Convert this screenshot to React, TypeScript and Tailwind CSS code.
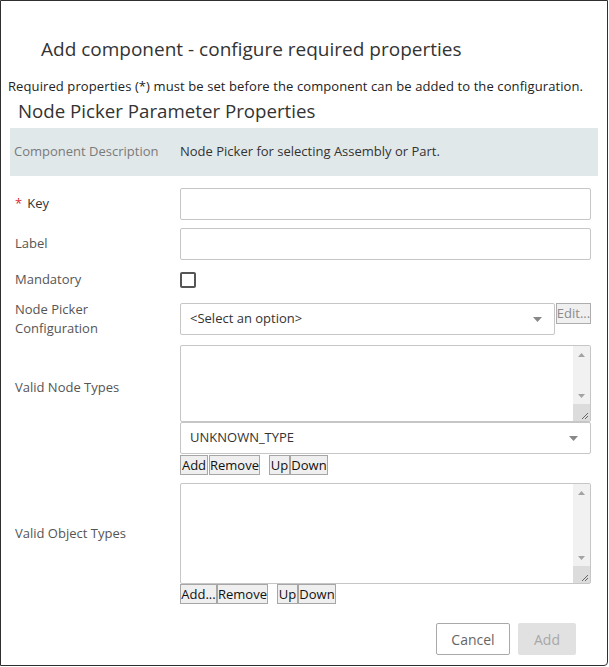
import React from "react";

const font = { fontFamily: '"Open Sans", "Noto Sans", sans-serif' };

function Arrow({ color = "#8a8a8a" }: { color?: string }) {
  return (
    <svg width="9" height="5" viewBox="0 0 9 5" className="block">
      <polygon points="0,0 9,0 4.5,5" fill={color} />
    </svg>
  );
}

function Select({ text, className }: { text: string; className: string }) {
  return (
    <div className={`flex items-center justify-between h-[32px] border border-[#c6c6c6] rounded-[2px] bg-white pl-[9px] pr-[12px] text-[13px] text-[#333] ${className}`}>
      <span>{text}</span>
      <Arrow color="#888" />
    </div>
  );
}

function TextArea({ h }: { h: string }) {
  return (
    <div className={`flex border border-[#c6c6c6] rounded-[2px] bg-white ${h}`}>
      <div className="flex-1" />
      <div className="w-[17px] flex flex-col bg-[#f1f1f1]">
        <div className="h-[17px] flex items-center justify-center">
          <svg width="7" height="4" viewBox="0 0 7 4"><polygon points="0,4 7,4 3.5,0" fill="#a3a3a3" /></svg>
        </div>
        <div className="flex-1" />
        <div className="h-[17px] flex items-center justify-center">
          <svg width="7" height="4" viewBox="0 0 7 4"><polygon points="0,0 7,0 3.5,4" fill="#a3a3a3" /></svg>
        </div>
        <div className="h-[17px] bg-[#dcdcdc] relative">
          <svg width="17" height="17" viewBox="0 0 17 17" className="absolute inset-0">
            <line x1="15" y1="9" x2="9" y2="15" stroke="#666" strokeWidth="1" />
            <line x1="15" y1="12" x2="12" y2="15" stroke="#666" strokeWidth="1" />
          </svg>
        </div>
      </div>
    </div>
  );
}

function SmallBtn({ children, w }: { children: React.ReactNode; w: string }) {
  return (
    <div className={`h-[20px] ${w} border border-[#a6a6a6] bg-[#efefef] text-[13px] leading-[18px] text-[#111] flex items-center justify-center`}>
      {children}
    </div>
  );
}

export default function App() {
  return (
    <div style={font} className="w-[609px] h-[667px] bg-white">
      <div className="w-[608px] h-[666px] border border-[#2f2f2f] rounded-br-[4px] flex flex-col">
        <div className="h-[31px]" />
        <div className="pl-[40px] text-[19px] leading-[34px] text-[#333]">Add component - configure required properties</div>
        <div className="h-[11px]" />
        <div className="pl-[7px] text-[13px] leading-[18px] text-[#222] tracking-[0.1px]">
          Required properties (*) must be set before the component can be added to the configuration.
        </div>
        <div className="pl-[17px] pt-[3px] text-[18.7px] leading-[26px] text-[#333]">Node Picker Parameter Properties</div>
        <div className="mx-[9px] mt-[4px] h-[48px] bg-[#e1e8ea] flex items-center text-[13px]">
          <div className="w-[170px] pl-[4px] text-[#7a7a7a]">Component Description</div>
          <div className="text-[#333]">Node Picker for selecting Assembly or Part.</div>
        </div>

        <div className="mt-[12px] flex flex-col text-[13px] text-[#555]">
          <div className="flex items-center h-[32px]">
            <div className="w-[179px] pl-[14px] text-[#333] flex items-center">
              <span className="text-[#d9262f] text-[13px] mr-[5px]">*</span>Key
            </div>
            <div className="w-[411px] h-[32px] border border-[#c6c6c6] rounded-[2px]" />
          </div>
          <div className="flex items-center h-[32px] mt-[8px]">
            <div className="w-[179px] pl-[14px]">Label</div>
            <div className="w-[411px] h-[32px] border border-[#c6c6c6] rounded-[2px]" />
          </div>
          <div className="flex items-center h-[16px] mt-[12px]">
            <div className="w-[179px] pl-[14px]">Mandatory</div>
            <div className="w-[16px] h-[16px] border-2 border-[#555] rounded-[2px]" />
          </div>
          <div className="flex items-start mt-[15px]">
            <div className="w-[179px] pl-[14px] leading-[19px] -mt-[3px]">
              Node Picker<br />Configuration
            </div>
            <Select text="<Select an option>" className="w-[375px]" />
            <div className="ml-[1px] h-[21px] w-[35px] border border-[#adadad] bg-[#f0f0f0] text-[13px] leading-[19px] text-[#8b8b8b] flex items-center justify-center">
              Edit...
            </div>
          </div>
          <div className="flex items-start mt-[7px]">
            <div className="w-[179px] pl-[14px] pt-[33px]">Valid Node Types</div>
            <div className="w-[411px] flex flex-col">
              <TextArea h="h-[77px]" />
              <Select text="UNKNOWN_TYPE" className="w-[411px]" />
              <div className="flex mt-[1px] text-[#111]">
                <SmallBtn w="w-[28px]">Add</SmallBtn>
                <div className="w-[1px]" />
                <SmallBtn w="w-[51px]">Remove</SmallBtn>
                <div className="w-[9px]" />
                <SmallBtn w="w-[21px]">Up</SmallBtn>
                <SmallBtn w="w-[38px]">Down</SmallBtn>
              </div>
            </div>
          </div>
          <div className="flex items-center mt-[8px]">
            <div className="w-[179px] pl-[14px]">Valid Object Types</div>
            <div className="w-[411px]">
              <TextArea h="h-[101px]" />
            </div>
          </div>
          <div className="flex pl-[179px] text-[#111]">
            <SmallBtn w="w-[37px]">Add...</SmallBtn>
            <SmallBtn w="w-[51px]">Remove</SmallBtn>
            <div className="w-[9px]" />
            <SmallBtn w="w-[21px]">Up</SmallBtn>
            <SmallBtn w="w-[38px]">Down</SmallBtn>
          </div>
        </div>

        <div className="flex justify-end mt-[19px] pr-[31px] gap-[8px]">
          <div className="w-[74px] h-[32px] border border-[#a9a9a9] rounded-[2px] flex items-center justify-center text-[14px] text-[#666]">Cancel</div>
          <div className="w-[58px] h-[32px] bg-[#e1e1e1] rounded-[2px] flex items-center justify-center text-[14px] text-[#a8a8a8]">Add</div>
        </div>
      </div>
    </div>
  );
}
